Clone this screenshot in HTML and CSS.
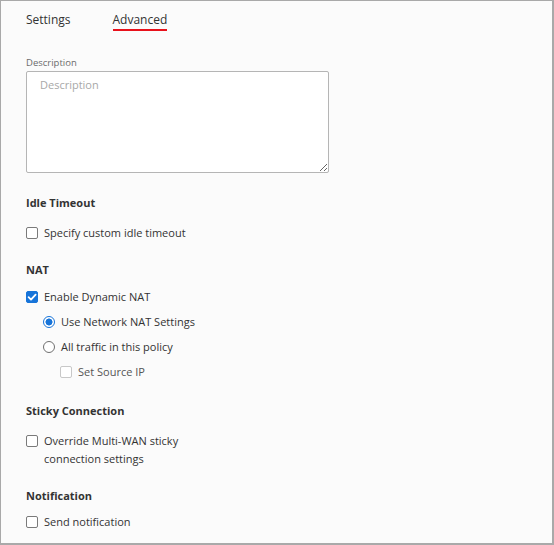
FILE: index.html
```html
<!DOCTYPE html>
<html>
<head>
<meta charset="utf-8">
<link rel="stylesheet" href="styles.css">
</head>
<body>
<div class="frame">
  <div class="tabs">
    <div class="tab">Settings</div>
    <div class="tab active">Advanced</div>
  </div>

  <label class="field-label">Description</label>
  <textarea class="desc" placeholder="Description"></textarea>

  <h3 class="sec sec-idle">Idle Timeout</h3>
  <label class="row gap-a"><span class="cb"></span><span>Specify custom idle timeout</span></label>

  <h3 class="sec sec-nat">NAT</h3>
  <label class="row gap-n"><span class="cb checked"><svg viewBox="0 0 12 12" width="12" height="12"><path d="M2.6 6.2 L5 8.6 L9.6 3.6" fill="none" stroke="#fff" stroke-width="1.8" stroke-linecap="round" stroke-linejoin="round"/></svg></span><span>Enable Dynamic NAT</span></label>
  <div class="sub">
    <label class="row gap-r"><span class="radio on"></span><span>Use Network NAT Settings</span></label>
    <label class="row gap-r"><span class="radio"></span><span>All traffic in this policy</span></label>
    <div class="sub">
      <label class="row gap-r disabled"><span class="cb dis"></span><span>Set Source IP</span></label>
    </div>
  </div>

  <h3 class="sec sec-sticky">Sticky Connection</h3>
  <label class="row gap-a wrap"><span class="cb"></span><span class="wrap-text">Override Multi-WAN sticky connection settings</span></label>

  <h3 class="sec sec-notif">Notification</h3>
  <label class="row gap-b"><span class="cb"></span><span>Send notification</span></label>
</div>
</body>
</html>
```

FILE: styles.css
```css
* { box-sizing: border-box; }
html, body { margin: 0; padding: 0; }
body {
  font-family: "Open Sans", "Liberation Sans", sans-serif;
  color: #333;
  background: #fff;
}
.frame {
  width: 554px;
  height: 545px;
  background: #fbfbfb;
  border: 1px solid #a9a9a9;
  border-right: 2px solid #a9a9a9;
  border-bottom: 2px solid #a9a9a9;
  padding: 0 0 0 25px;
  display: flex;
  flex-direction: column;
  align-items: flex-start;
  overflow: hidden;
}
.tabs {
  display: flex;
  gap: 42px;
  padding-top: 10px;
}
.tab {
  font-size: 12px;
  line-height: 18px;
  padding-bottom: 0;
  border-bottom: 2px solid transparent;
  color: #333;
}
.tab.active { border-bottom-color: #e8111b; }

.field-label {
  display: block;
  margin-top: 25px;
  font-size: 9.5px;
  line-height: 14px;
  color: #6b6b6b;
}
.desc {
  display: block;
  margin-top: 1px;
  width: 303px;
  height: 102px;
  border: 1px solid #b5b5b5;
  border-radius: 2px;
  background: #fff;
  padding: 5px 13px;
  font-family: "Open Sans", "Liberation Sans", sans-serif;
  font-size: 11px;
  line-height: 16px;
  color: #333;
  resize: vertical;
  outline: none;
}
.desc::placeholder { color: #a8a8a8; }

.sec {
  margin: 0;
  font-size: 11px;
  line-height: 16px;
  font-weight: 700;
  color: #333;
}
.sec-idle { margin-top: 22px; }
.sec-nat { margin-top: 20px; }
.sec-sticky { margin-top: 22px; }
.sec-notif { margin-top: 20px; }

.row {
  display: flex;
  align-items: flex-start;
  gap: 6px;
  font-size: 11px;
  line-height: 18px;
  color: #333;
}
.gap-a { margin-top: 13px; }
.gap-n { margin-top: 10px; }
.gap-b { margin-top: 9px; }
.gap-r { margin-top: 7px; }
.sub { padding-left: 17px; }

.cb {
  flex: none;
  width: 12px;
  height: 12px;
  margin-top: 3px;
  border: 1px solid #7a7a7a;
  border-radius: 2px;
  background: #fff;
  display: flex;
}
.cb.checked { background: #1774d9; border-color: #1774d9; }
.cb.checked svg { display: block; margin: -1px; }
.cb.dis { border-color: #c8c8c8; }
.disabled { color: #555; }

.radio {
  flex: none;
  width: 12px;
  height: 12px;
  margin-top: 3px;
  border: 1px solid #6f6f6f;
  border-radius: 50%;
  background: #fff;
}
.radio.on {
  border-color: #1774d9;
  background: radial-gradient(circle, #1774d9 0 3.2px, #fff 3.8px);
}
.wrap-text { max-width: 150px; }
```
